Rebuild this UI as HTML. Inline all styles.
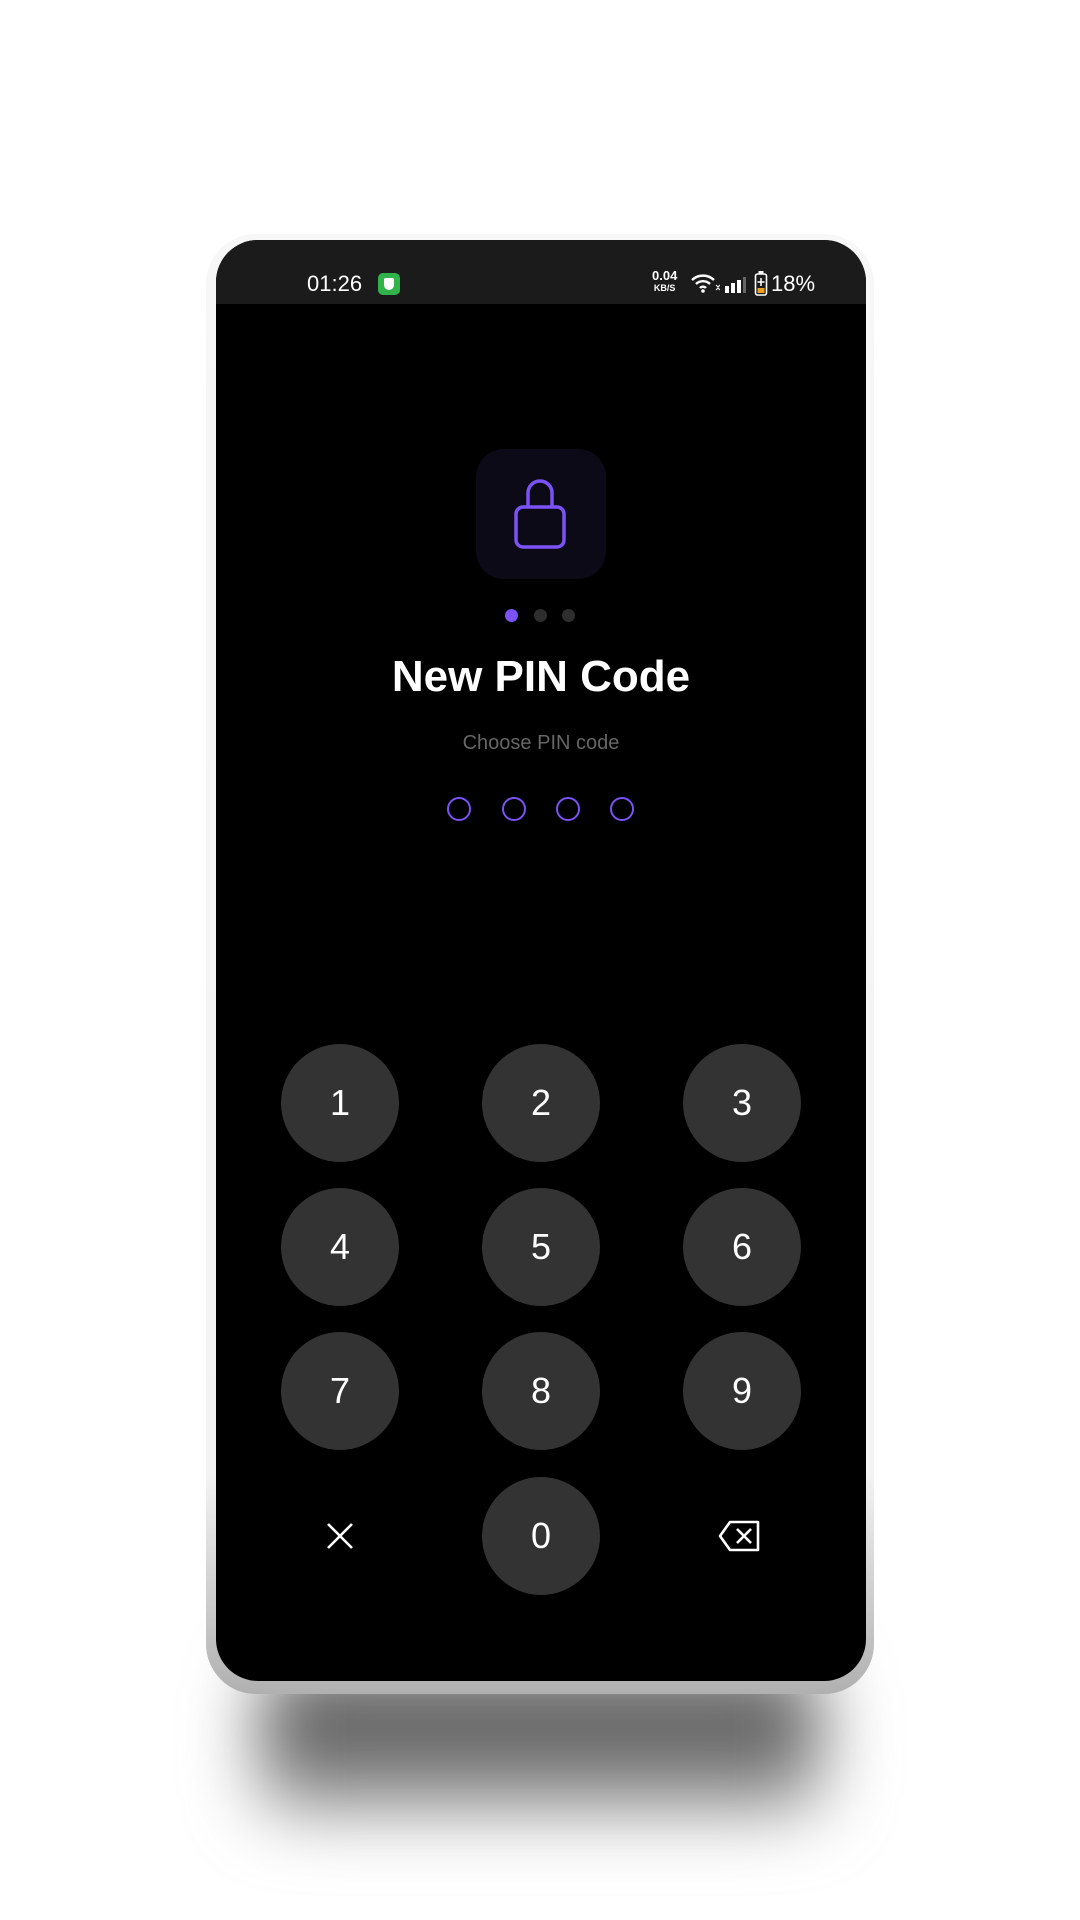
<!DOCTYPE html>
<html><head><meta charset="utf-8"><style>
*{margin:0;padding:0;box-sizing:border-box}
body{width:1080px;height:1920px;background:#fff;position:relative;overflow:hidden;font-family:"Liberation Sans",Roboto,sans-serif}
.shadow{position:absolute;left:260px;top:1670px;width:560px;height:140px;background:linear-gradient(#444,#999);filter:blur(36px);border-radius:30px}
.frame{position:absolute;left:206px;top:234px;width:668px;height:1460px;border-radius:50px;background:linear-gradient(#f7f7f7 0,#f3f3f3 85%,#b0b0b0 100%)}
.phone{position:absolute;left:216px;top:240px;width:650px;height:1441px;border-radius:42px;background:#000;overflow:hidden}
.sb{position:absolute;left:0;top:0;width:650px;height:64px;background:#1b1b1b;color:#fff}
.abs{position:absolute}
.key{position:absolute;width:118px;height:118px;border-radius:50%;background:#333;color:#fff;font-size:36px;display:flex;align-items:center;justify-content:center}
.pin{position:absolute;top:557px;width:24px;height:24px;border:2.5px solid #7b52f5;border-radius:50%}
.dot{position:absolute;top:369px;width:13px;height:13px;border-radius:50%;background:#2e2e2e}
</style></head><body>
<div class="shadow"></div>
<div class="frame"></div>
<div class="phone">
 <div class="sb">
  <div class="abs" style="left:91px;top:31px;font-size:22px">01:26</div>
  <div class="abs" style="left:162px;top:33px;width:22px;height:22px;background:#2fb34a;border-radius:5px"><div style="position:absolute;left:6px;top:5px;width:10px;height:12px;background:#fff;border-radius:2px 2px 6px 6px"></div></div>
  <div class="abs" style="left:436px;top:30px;font-size:13px;font-weight:bold;line-height:11px;text-align:center">0.04<br><span style="font-size:9px">KB/S</span></div>
  <svg class="abs" style="left:474px;top:32px" width="30" height="22" viewBox="0 0 30 22"><path d="M2 8a16 16 0 0 1 22 0M6 12a10 10 0 0 1 14 0M10 16a4 4 0 0 1 6 0" stroke="#fff" stroke-width="2.4" fill="none"/><circle cx="13" cy="19" r="1.8" fill="#fff"/><path d="M26 13l2 2 2-2M26 18l2-2 2 2" stroke="#fff" stroke-width="1" fill="none"/></svg>
  <svg class="abs" style="left:508px;top:36px" width="24" height="18"><rect x="1" y="10" width="4" height="7" fill="#fff"/><rect x="7" y="7" width="4" height="10" fill="#fff"/><rect x="13" y="4" width="4" height="13" fill="#fff"/><rect x="19" y="1" width="3" height="16" fill="#666"/></svg>
  <svg class="abs" style="left:538px;top:31px" width="14" height="26"><rect x="1.5" y="3" width="11" height="21" rx="2" stroke="#fff" stroke-width="1.6" fill="none"/><rect x="4.5" y="0" width="5" height="3" fill="#fff"/><rect x="3.5" y="17" width="7" height="5" fill="#f0a020"/><path d="M7 7v8M3.5 11h7" stroke="#fff" stroke-width="1.5"/></svg>
  <div class="abs" style="left:555px;top:31px;font-size:22px">18%</div>
 </div>
 <div class="abs" style="left:260px;top:209px;width:130px;height:130px;border-radius:28px;background:#0d0a17"></div>
 <svg class="abs" style="left:290px;top:239px" width="70" height="70" viewBox="0 0 70 70"><rect x="10" y="28" width="48" height="40" rx="7" stroke="#7b52f5" stroke-width="3.5" fill="none"/><path d="M22 28V14a12 12 0 0 1 24 0V28" stroke="#7b52f5" stroke-width="3.5" fill="none"/></svg>
 <div class="dot" style="left:289px;background:#7b52f5"></div>
 <div class="dot" style="left:318px"></div>
 <div class="dot" style="left:346px"></div>
 <div class="abs" style="left:0;width:650px;top:652px;top:412px;text-align:center;color:#fff;font-size:44px;font-weight:bold">New PIN Code</div>
 <div class="abs" style="left:0;width:650px;top:492px;text-align:center;color:#666;font-size:20px">Choose PIN code</div>
 <div class="pin" style="left:231px"></div>
 <div class="pin" style="left:286px"></div>
 <div class="pin" style="left:340px"></div>
 <div class="pin" style="left:394px"></div>
 <div class="key" style="left:65px;top:804px">1</div>
 <div class="key" style="left:266px;top:804px">2</div>
 <div class="key" style="left:467px;top:804px">3</div>
 <div class="key" style="left:65px;top:948px">4</div>
 <div class="key" style="left:266px;top:948px">5</div>
 <div class="key" style="left:467px;top:948px">6</div>
 <div class="key" style="left:65px;top:1092px">7</div>
 <div class="key" style="left:266px;top:1092px">8</div>
 <div class="key" style="left:467px;top:1092px">9</div>
 <div class="key" style="left:266px;top:1237px">0</div>
 <svg class="abs" style="left:110px;top:1282px" width="28" height="28"><path d="M2 2L26 26M26 2L2 26" stroke="#fff" stroke-width="2.6"/></svg>
 <svg class="abs" style="left:502px;top:1280px" width="44" height="32" viewBox="0 0 44 32"><path d="M12 2H40V30H12L2 16Z" stroke="#fff" stroke-width="2.6" fill="none" stroke-linejoin="round"/><path d="M19 9L33 23M33 9L19 23" stroke="#fff" stroke-width="2.6"/></svg>
</div>
</body></html>
